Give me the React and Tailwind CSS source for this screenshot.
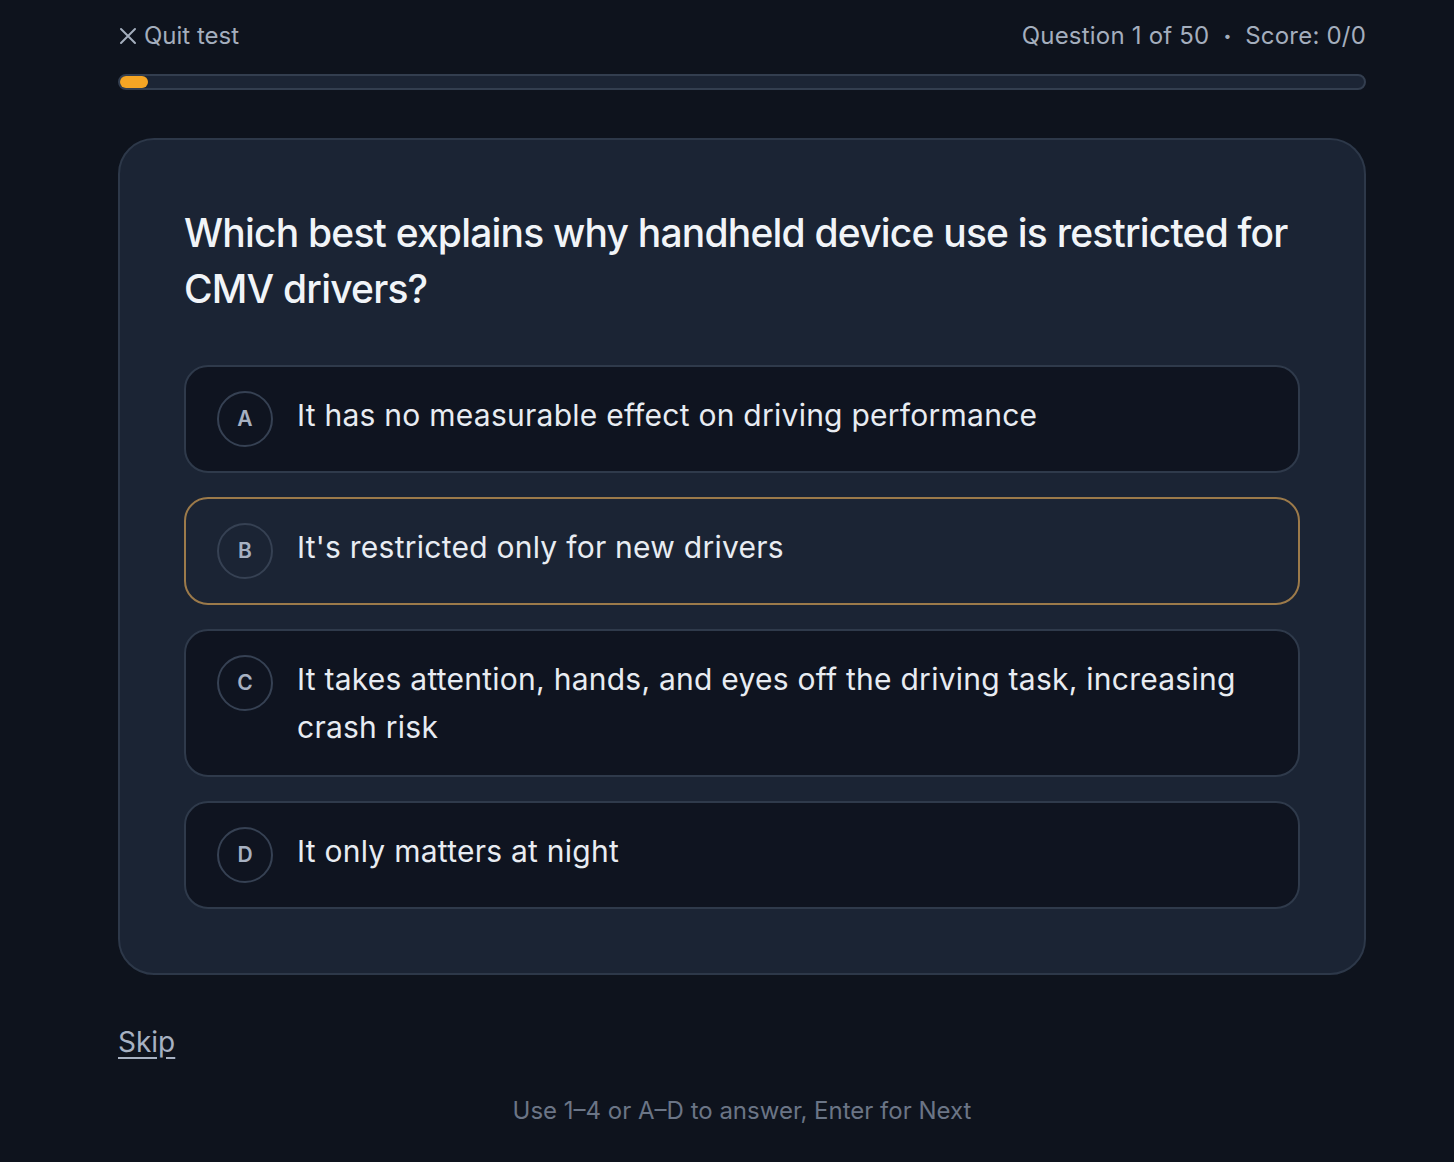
import React, { useState } from 'react';

const options = [
  { key: 'A', text: 'It has no measurable effect on driving performance' },
  { key: 'B', text: "It's restricted only for new drivers" },
  { key: 'C', text: 'It takes attention, hands, and eyes off the driving task, increasing crash risk' },
  { key: 'D', text: 'It only matters at night' },
];

const XIcon = () => (
  <svg width="20" height="20" viewBox="0 0 20 20" fill="none" stroke="currentColor" strokeWidth="2" strokeLinecap="round">
    <path d="M3 3l14 14M17 3L3 17" />
  </svg>
);

const App = () => {
  const [hovered] = useState('B');

  return (
    <div
      className="min-h-[1162px] w-full bg-[#0e131d] text-[#e5e9f0]"
      style={{ fontFamily: 'Inter, "Noto Sans", "Liberation Sans", sans-serif' }}
    >
      <div className="ml-[118px] w-[1248px] pt-[18px]">
        <div className="flex items-center justify-between text-[24px] leading-[36px] text-[#a4aebd]">
          <button className="flex items-center gap-[6px]">
            <XIcon />
            <span>Quit test</span>
          </button>
          <div className="flex items-center gap-[14px]">
            <span className="tracking-[0.2px]">Question 1 of 50</span>
            <span className="text-[14px]">•</span>
            <span className="tracking-[0.2px]">Score: 0/0</span>
          </div>
        </div>

        <div className="mt-[20px] h-[16px] rounded-full border-2 border-[#333e4f] bg-[#1c2535]">
          <div className="h-full w-[28px] rounded-full bg-[#f5a524]" />
        </div>

        <div className="mt-[48px] rounded-[36px] border-2 border-[#2d3849] bg-[#1b2434] px-[64px] pt-[65px] pb-[64px]">
          <h1 className="text-[39px] font-medium leading-[56px] tracking-[-0.8px] text-[#f1f4f8]">
            Which best explains why handheld device use is restricted for CMV drivers?
          </h1>
          <div className="mt-[48px] flex flex-col gap-[24px]">
            {options.map((o) => (
              <div
                key={o.key}
                className={
                  o.key === hovered
                    ? 'flex items-start gap-[24px] rounded-[24px] border-2 border-[#9c7a4a] bg-[#1b2434] px-[31px] py-[24px]'
                    : 'flex items-start gap-[24px] rounded-[24px] border-2 border-[#2f3a4b] bg-[#0f1420] px-[31px] py-[24px]'
                }
              >
                <div className="flex h-[56px] w-[56px] shrink-0 items-center justify-center rounded-full border-2 border-[#364153] text-[21px] font-semibold text-[#a7b1c2]">
                  {o.key}
                </div>
                <div className="text-[30px] leading-[48px] tracking-[0.25px] text-[#e8ecf2]">{o.text}</div>
              </div>
            ))}
          </div>
        </div>

        <div className="mt-[47px]">
          <button className="text-[28px] leading-[40px] text-[#a7b1c2] underline underline-offset-[5px]">Skip</button>
        </div>

        <div className="mt-[33px] text-center text-[24px] leading-[32px] text-[#6b7586]">
          Use 1–4 or A–D to answer, Enter for Next
        </div>
      </div>
    </div>
  );
};

export default App;
